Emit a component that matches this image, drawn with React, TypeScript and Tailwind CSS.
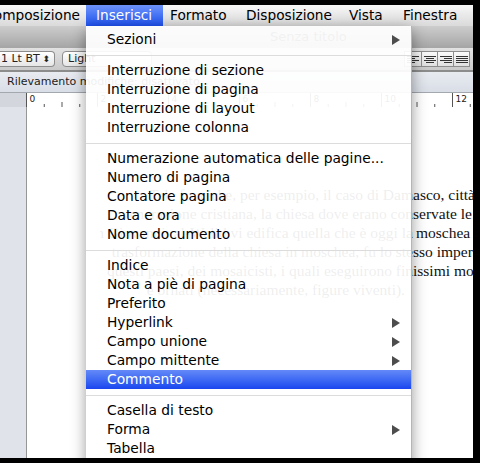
import React from "react";

type Entry = { label?: string; sub?: boolean; active?: boolean; sep?: boolean };

const MENU: Entry[] = [
  { label: "Sezioni", sub: true },
  { sep: true },
  { label: "Interruzione di sezione" },
  { label: "Interruzione di pagina" },
  { label: "Interruzione di layout" },
  { label: "Interruzione colonna" },
  { sep: true },
  { label: "Numerazione automatica delle pagine..." },
  { label: "Numero di pagina" },
  { label: "Contatore pagina" },
  { label: "Data e ora" },
  { label: "Nome documento" },
  { sep: true },
  { label: "Indice" },
  { label: "Nota a piè di pagina" },
  { label: "Preferito" },
  { label: "Hyperlink", sub: true },
  { label: "Campo unione", sub: true },
  { label: "Campo mittente", sub: true },
  { label: "Commento", active: true },
  { sep: true },
  { label: "Casella di testo" },
  { label: "Forma", sub: true },
  { label: "Tabella" },
  { label: "Filmato" },
];

// righe del documento: parte sotto il menu + parte visibile a destra
const LINES = [
  { left: "Tale fu anche, per esempio, il caso di Dam", right: "asco, città di", pad: false, end: false },
  { left: "venerazione cristiana, la chiesa dove erano con", right: "servate le reliquie", pad: false, end: false },
  { left: "di San Giovanni; al-Walid vi edifica quella che è oggi la", right: "moschea degli", pad: true, end: false },
  { left: "trasformazione della chiesa in moschea, fu lo ste", right: "sso imperatore", pad: false, end: false },
  { left: "questi paesi, dei mosaicisti, i quali eseguirono fin", right: "issimi mosaici", pad: false, end: false },
  { left: "e ornati (necessariamente, figure viventi).", right: "", pad: false, end: true },
];

const Arrow = () => (
  <svg width="8" height="10" viewBox="0 0 8 10">
    <polygon points="0,0 8,5 0,10" fill="#4d4d4d" />
  </svg>
);

const AlignIcon = ({ kind }: { kind: "left" | "center" | "right" | "justify" }) => {
  const rows = [12, 8, 12, 8];
  return (
    <svg width="12" height="9" viewBox="0 0 12 9">
      {rows.map((w, i) => {
        const len = kind === "justify" ? 12 : w;
        const x = kind === "center" ? (12 - len) / 2 : kind === "right" ? 12 - len : 0;
        return <rect key={i} x={x} y={i * 2 + 1} width={len} height="1" fill="#333" />;
      })}
    </svg>
  );
};

const Ruler = () => {
  const ticks = [];
  for (let i = 0; i <= 54; i++) {
    const x = 26.5 + i * 8.875;
    if (i % 8 === 0) {
      ticks.push(<line key={i} x1={x} x2={x} y1={0} y2={14} stroke="#555" strokeWidth="1" />);
      ticks.push(
        <text key={"t" + i} x={x + 3} y={9} fontSize="9" fontFamily="'DejaVu Sans', sans-serif" fill="#222">
          {i / 4}
        </text>
      );
    } else if (i % 4 === 0) {
      ticks.push(<line key={i} x1={x} x2={x} y1={9} y2={14} stroke="#555" strokeWidth="1" />);
    } else if (i % 2 === 0) {
      ticks.push(<line key={i} x1={x} x2={x} y1={11} y2={14} stroke="#555" strokeWidth="1" />);
    }
  }
  return (
    <svg width="473" height="14" className="block">
      <rect x="0" y="0" width="26" height="14" fill="#d3d7dd" />
      {ticks}
    </svg>
  );
};

export default function App() {
  return (
    <div className="w-[480px] h-[463px] bg-black pt-[5px] pr-[7px] pb-[5px] font-['DejaVu_Sans',sans-serif]">
      <div className="relative w-[473px] h-[453px] overflow-hidden bg-white flex flex-col">
        {/* barra dei menu */}
        <div className="h-[21px] flex items-stretch bg-gradient-to-b from-[#f7f7f7] to-[#dadada] text-[13.7px] text-black shrink-0">
          <div className="w-[86px] flex justify-end items-center overflow-hidden pr-[6px] whitespace-nowrap">
            Composizione
          </div>
          <div className="w-[77px] pl-[10px] flex items-center text-white bg-gradient-to-b from-[#6d92f8] to-[#1f4ff0]">
            Inserisci
          </div>
          <div className="w-[76px] pl-[7px] flex items-center">Formato</div>
          <div className="w-[103px] pl-[7px] flex items-center">Disposizione</div>
          <div className="w-[54px] pl-[7px] flex items-center">Vista</div>
          <div className="flex-1 pl-[7px] flex items-center whitespace-nowrap">Finestra</div>
        </div>

        {/* barra del titolo */}
        <div className="h-[22px] shrink-0 bg-gradient-to-b from-[#cdcdcd] to-[#a5a5a5] flex items-center pl-[270px] text-[13px] text-[#3c3c3c]">
          Senza titolo
        </div>

        {/* barra formattazione */}
        <div className="h-[22px] shrink-0 bg-gradient-to-b from-[#e2e2e2] to-[#c9c9c9] flex items-center text-[11px] text-[#222]">
          <div className="h-[16px] w-[55px] bg-gradient-to-b from-white to-[#e6e6e6] border border-l-0 border-[#8d8d8d] rounded-r-[4px] flex items-center justify-between pl-[1px] pr-[4px] whitespace-nowrap">
            <span>1 Lt BT</span>
            <span className="text-[9px] leading-none">⬍</span>
          </div>
          <div className="ml-[7px] h-[16px] w-[90px] bg-gradient-to-b from-white to-[#e6e6e6] border border-[#8d8d8d] rounded-[4px] flex items-center pl-[5px]">
            Light
          </div>
          <div className="ml-auto mr-[3px] flex h-[16px] border border-[#8d8d8d] bg-gradient-to-b from-[#fafafa] to-[#e0e0e0]">
            {(["left", "center", "right", "justify"] as const).map((k, i) => (
              <div
                key={k}
                className={`w-[16px] flex items-center justify-center ${i > 0 ? "border-l border-[#8d8d8d]" : ""}`}
              >
                <AlignIcon kind={k} />
              </div>
            ))}
          </div>
        </div>
        <div className="h-[2px] shrink-0 bg-[#8c8c8c]" />

        {/* barra rilevamento */}
        <div className="h-[21px] shrink-0 bg-gradient-to-b from-[#e8ebf0] to-[#d9dee7] border-b border-[#a3a7ae] flex items-center pl-[7px] text-[11px] text-[#222] whitespace-nowrap">
          Rilevamento modifiche: disattivato
        </div>

        <Ruler />

        {/* area documento */}
        <div className="flex-1 flex min-h-0">
          <div className="w-[27px] bg-[#e0e4ea] border-r border-[#969696] shrink-0" />
          <div className="flex-1 bg-white pt-[78px] pl-[73px] font-['Liberation_Serif',serif] text-[15.5px] leading-[19px] text-[#111]">
            {LINES.map((l, i) => (
              <div key={i} className="flex whitespace-nowrap">
                <div className={`w-[313px] shrink-0 flex justify-end overflow-hidden ${l.end ? "pr-[8px]" : ""}`}>
                  <span>{l.left}</span>
                </div>
                <span className={l.pad ? "pl-[3px]" : ""}>{l.right}</span>
              </div>
            ))}
          </div>
        </div>

        {/* menu Inserisci aperto */}
        <div className="absolute left-[86px] top-[21px] w-[326px] h-[460px] bg-white/[0.93] border-r border-[#b5b5b5] shadow-[0_4px_14px_rgba(0,0,0,0.4)] pt-[4px] text-[13.8px] text-black">
          {MENU.map((m, i) =>
            m.sep ? (
              <div key={i} className="h-[12px] pt-[6px]">
                <div className="h-px bg-[#dcdcdc]" />
              </div>
            ) : (
              <div
                key={i}
                className={`h-[19px] flex items-center justify-between pl-[21px] pr-[11px] whitespace-nowrap ${
                  m.active ? "bg-gradient-to-b from-[#6489f7] to-[#1b44ef] text-white" : ""
                }`}
              >
                <span>{m.label}</span>
                {m.sub && <Arrow />}
              </div>
            )
          )}
        </div>
      </div>
    </div>
  );
}
